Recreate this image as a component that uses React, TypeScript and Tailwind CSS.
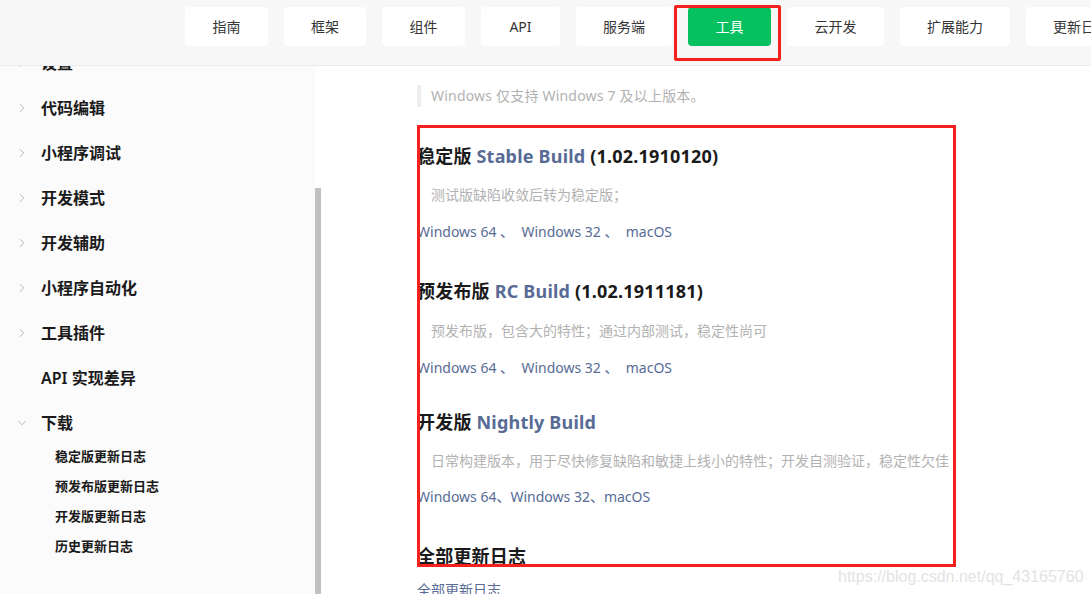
import React from 'react';
import { ChevronRight, ChevronDown } from 'lucide-react';

const navItems = [
  { label: '指南', w: 'w-[83px]' },
  { label: '框架', w: 'w-[82px]' },
  { label: '组件', w: 'w-[83px]' },
  { label: 'API', w: 'w-[79px]' },
  { label: '服务端', w: 'w-[96px]' },
  { label: '工具', w: 'w-[83px]', active: true },
  { label: '云开发', w: 'w-[97px]' },
  { label: '扩展能力', w: 'w-[110px]' },
  { label: '更新日志', w: 'w-[110px]' },
];

const sideItems = [
  { label: '设置', chevron: true },
  { label: '代码编辑', chevron: true },
  { label: '小程序调试', chevron: true },
  { label: '开发模式', chevron: true },
  { label: '开发辅助', chevron: true },
  { label: '小程序自动化', chevron: true },
  { label: '工具插件', chevron: true },
  { label: 'API 实现差异', chevron: false },
];

const subItems = ['稳定版更新日志', '预发布版更新日志', '开发版更新日志', '历史更新日志'];

const Sep = ({ spaced }: { spaced: boolean }) => (
  <span className="text-[#576b95]">{spaced ? '\u00a0、\u00a0\u00a0' : '、'}</span>
);

const Links = ({ spaced = true }: { spaced?: boolean }) => (
  <p className="h-[22px] leading-[22px] text-[14px] text-[#576b95] whitespace-nowrap">
    Windows 64<Sep spaced={spaced} />Windows 32<Sep spaced={spaced} />macOS
  </p>
);

const Desc = ({ children }: { children: React.ReactNode }) => (
  <div className="h-[22px] border-l-[3px] border-[#f2f2f2] pl-[11px] leading-[22px] text-[14px] text-[#b2b2b2] whitespace-nowrap">
    {children}
  </div>
);

const Heading = ({ zh, en, ver }: { zh: string; en?: string; ver?: string }) => (
  <h2 className="h-[28px] leading-[28px] text-[18px] font-bold text-[#1a1a1a] whitespace-nowrap tracking-[0.2px]">
    {zh}
    {en && <span className="text-[#576b95]"> {en}</span>}
    {ver && <span> {ver}</span>}
  </h2>
);

export default function App() {
  return (
    <div
      className="relative w-[1091px] h-[594px] overflow-hidden bg-white"
      style={{ fontFamily: '"Noto Sans", "Noto Sans CJK SC", sans-serif' }}
    >
      {/* top nav */}
      <header className="h-[66px] bg-[#f7f7f7] border-b border-[#ececec] flex items-start pt-[7px] pl-[185px] gap-4 whitespace-nowrap">
        {navItems.map((n) => (
          <div
            key={n.label}
            className={`${n.w} shrink-0 h-[39px] rounded-[4px] flex items-center justify-center text-[14px] ${
              n.active ? 'bg-[#07c160] text-white' : 'bg-white text-[#353535]'
            }`}
          >
            {n.label}
          </div>
        ))}
      </header>

      <div className="flex h-[528px]">
        {/* sidebar */}
        <aside className="w-[315px] shrink-0 bg-[#fbfbfb] overflow-hidden">
          <div className="-mt-[26px]">
            {sideItems.map((s) => (
              <div key={s.label} className="h-[45px] flex items-center">
                <div className="w-[41px] flex justify-center pl-[2px]">
                  {s.chevron && <ChevronRight size={14} strokeWidth={1.6} className="text-[#b0b0b0]" />}
                </div>
                <span className="text-[16px] font-semibold text-[#1a1a1a]">{s.label}</span>
              </div>
            ))}
            <div className="h-[45px] flex items-center">
              <div className="w-[41px] flex justify-center pl-[2px]">
                <ChevronDown size={14} strokeWidth={1.6} className="text-[#b0b0b0]" />
              </div>
              <span className="text-[16px] font-semibold text-[#1a1a1a]">下载</span>
            </div>
            <div className="-mt-[3px]">
              {subItems.map((s) => (
                <div key={s} className="h-[30px] flex items-center pl-[55px] text-[13px] font-semibold text-[#1a1a1a]">
                  {s}
                </div>
              ))}
            </div>
          </div>
        </aside>

        {/* scrollbar */}
        <div className="w-[6px] shrink-0 flex flex-col">
          <div className="h-[122px]" />
          <div className="flex-1 bg-[#c1c1c1]" />
        </div>

        {/* content */}
        <main className="flex-1 pl-[96px] pt-[19px]">
          <div className="h-[22px] border-l-4 border-[#eeeeee] pl-[10px] leading-[22px] text-[14px] text-[#b2b2b2] tracking-[0.2px]">
            Windows 仅支持 Windows 7 及以上版本。
          </div>

          <div className="mt-[35px]">
            <Heading zh="稳定版" en="Stable Build" ver="(1.02.1910120)" />
          </div>
          <div className="mt-[14px]">
            <Desc>测试版缺陷收敛后转为稳定版；</Desc>
          </div>
          <div className="mt-[15px]">
            <Links />
          </div>

          <div className="mt-[34px]">
            <Heading zh="预发布版" en="RC Build" ver="(1.02.1911181)" />
          </div>
          <div className="mt-[15px]">
            <Desc>预发布版，包含大的特性；通过内部测试，稳定性尚可</Desc>
          </div>
          <div className="mt-[15px]">
            <Links />
          </div>

          <div className="mt-[29px]">
            <Heading zh="开发版" en="Nightly Build" />
          </div>
          <div className="mt-[14px]">
            <Desc>日常构建版本，用于尽快修复缺陷和敏捷上线小的特性；开发自测验证，稳定性欠佳</Desc>
          </div>
          <div className="mt-[14px]">
            <Links spaced={false} />
          </div>

          <div className="mt-[34px]">
            <Heading zh="全部更新日志" />
          </div>
          <p className="mt-[9px] h-[22px] leading-[22px] text-[14px] text-[#576b95]">全部更新日志</p>
        </main>
      </div>

      {/* annotation rectangles */}
      <div className="absolute left-[674px] top-[5px] w-[107px] h-[56px] border-[3px] border-[#f5211d] rounded-[2px]" />
      <div className="absolute left-[417px] top-[125px] w-[539px] h-[442px] border-[3px] border-[#f5211d]" />

      {/* watermark */}
      <div
        className="absolute left-[838px] top-[565px] text-[16px] text-[#e3e3e3] whitespace-nowrap"
        style={{ fontFamily: '"Liberation Sans", Arial, sans-serif' }}
      >
        https://blog.csdn.net/qq_43165760
      </div>
    </div>
  );
}
